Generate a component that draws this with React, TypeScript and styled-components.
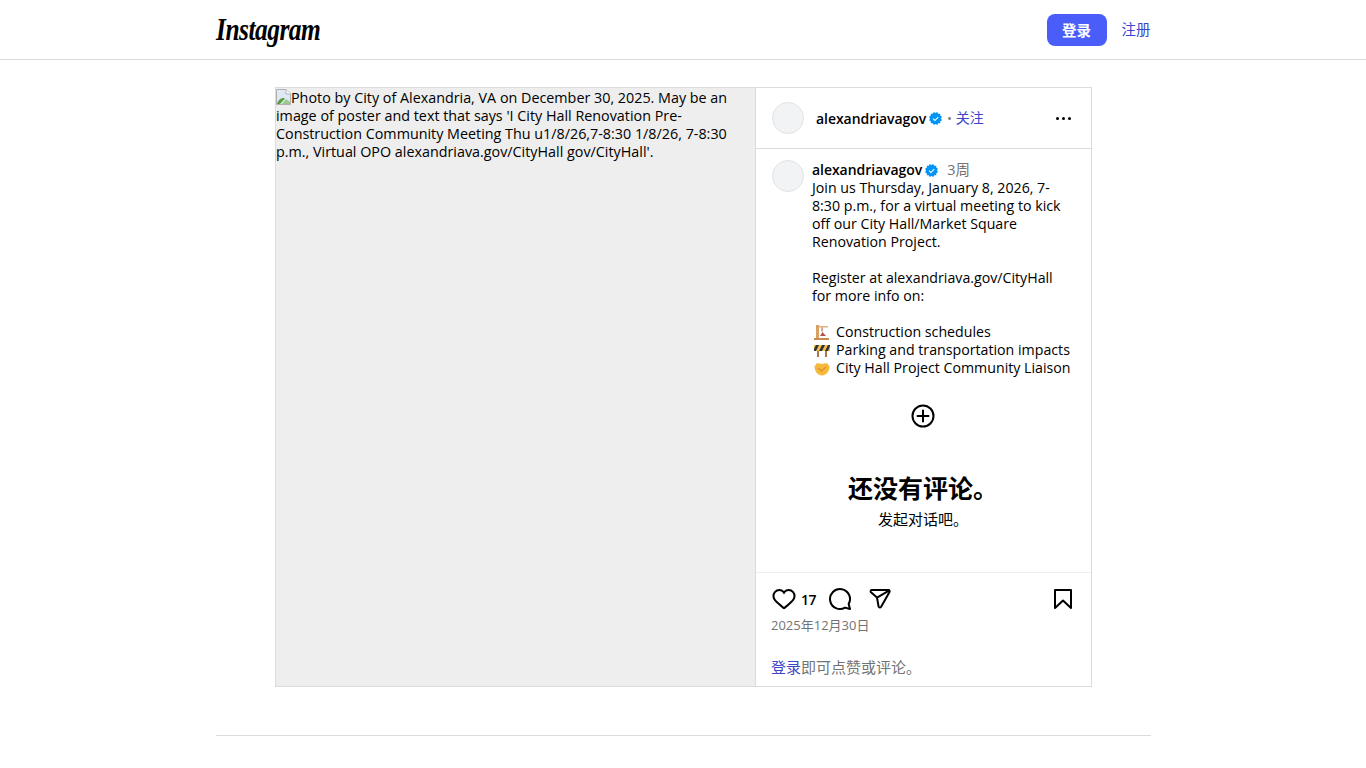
import React from 'react';
import styled, { createGlobalStyle } from 'styled-components';

const FONT = '"Open Sans", "Noto Sans CJK SC", sans-serif';

const GlobalStyle = createGlobalStyle`
  html, body {
    margin: 0;
    padding: 0;
    background: #fff;
    color: #000;
    font-family: ${FONT};
  }
`;

const TopBar = styled.header`
  height: 59px;
  border-bottom: 1px solid #dbdbdb;
`;

const TopBarInner = styled.div`
  width: 935px;
  height: 100%;
  margin: 0 auto;
  display: flex;
  align-items: center;
  justify-content: space-between;
`;

const Wordmark = styled.span`
  display: inline-block;
  font-family: "Liberation Serif", serif;
  font-style: italic;
  font-weight: 700;
  font-size: 31px;
  letter-spacing: -0.6px;
  line-height: 36px;
  color: #000;
  transform: scaleX(0.82);
  transform-origin: left center;
`;

const AuthLinks = styled.div`
  display: flex;
  align-items: center;
  gap: 15px;
`;

const LoginButton = styled.button`
  width: 60px;
  height: 32px;
  border: 0;
  border-radius: 8px;
  background: #4a5df9;
  color: #fff;
  font-family: ${FONT};
  font-size: 14.5px;
  font-weight: 700;
  padding: 0;
`;

const BlueLink = styled.a<{ $size?: number }>`
  color: #3c46c9;
  font-size: ${p => p.$size ?? 14.5}px;
  line-height: 18px;
`;

const Main = styled.main`
  width: 817px;
  margin: 27px 0 0 275px;
`;

const Post = styled.article`
  box-sizing: border-box;
  height: 600px;
  border: 1px solid #dbdbdb;
  display: flex;
`;

const PhotoPane = styled.div`
  width: 479px;
  padding-top: 1px;
  background: #eeeeee;
  font-size: 14.33px;
  line-height: 18px;
  color: #000;
`;

const BrokenIcon = styled.svg`
  width: 15px;
  height: 16px;
  vertical-align: -2px;
`;

const SidePane = styled.div`
  flex: 1;
  min-width: 0;
  border-left: 1px solid #dbdbdb;
  display: flex;
  flex-direction: column;
`;

const PostHeader = styled.div`
  height: 60px;
  border-bottom: 1px solid #dbdbdb;
  display: flex;
  align-items: center;
  padding: 0 16px;
`;

const Avatar = styled.div`
  flex: none;
  box-sizing: border-box;
  width: 32px;
  height: 32px;
  border-radius: 50%;
  background: #f1f3f5;
  border: 1px solid #e3e3e3;
`;

const HeaderName = styled.span`
  margin: 1px 0 0 12px;
  font-size: 14px;
  font-weight: 600;
  line-height: 18px;
  letter-spacing: -0.05px;
`;

const Badge = styled.svg`
  flex: none;
  width: 13px;
  height: 13px;
  margin-left: 3px;
`;

const Dot = styled.span`
  margin: 0 4px 0 5px;
  color: #737373;
  font-size: 12px;
`;

const MoreButton = styled.div`
  margin-left: auto;
  display: flex;
  gap: 3px;
  padding-right: 4px;
`;

const MoreDot = styled.i`
  width: 3px;
  height: 3px;
  border-radius: 50%;
  background: #000;
`;

const Comments = styled.div`
  flex: 1;
  min-height: 0;
  padding: 11px 16px 0;
  display: flex;
  flex-direction: column;
`;

const CommentRow = styled.div`
  display: flex;
`;

const CommentBody = styled.div`
  width: 258px;
  margin: 1px 0 0 8px;
  font-size: 14.2px;
  line-height: 18px;
`;

const CommentHead = styled.div`
  display: flex;
  align-items: center;
`;

const CommentName = styled.span`
  font-size: 14px;
  font-weight: 600;
  letter-spacing: -0.05px;
`;

const Age = styled.span`
  margin-left: 9px;
  color: #737373;
  font-size: 14.5px;
`;

const Paragraph = styled.p`
  margin: 0 0 18px;
`;

const EmojiLine = styled.div`
  display: flex;
  align-items: center;
  gap: 6px;
  white-space: nowrap;
`;

const Emoji = styled.svg`
  flex: none;
  margin-left: 2px;
  width: 16px;
  height: 17px;
`;

const EmptyState = styled.div`
  display: flex;
  flex-direction: column;
  align-items: center;
`;

const PlusIcon = styled.svg`
  width: 24px;
  height: 24px;
  margin: 27px 1px 0 0;
`;

const EmptyTitle = styled.h2`
  margin: 44px 1px 0 0;
  font-size: 25px;
  font-weight: 700;
  line-height: 32px;
`;

const EmptySub = styled.p`
  margin: 6px 1px 0 0;
  font-size: 15px;
  line-height: 18px;
`;

const Actions = styled.section`
  border-top: 1px solid #efefef;
  padding: 14px 16px 0;
  height: 114px;
  box-sizing: border-box;
`;

const ActionRow = styled.div`
  display: flex;
  align-items: center;
  height: 24px;
`;

const ActionIcon = styled.svg<{ $gap?: number }>`
  flex: none;
  width: 24px;
  height: 24px;
  margin-left: ${p => p.$gap ?? 0}px;
  color: #000;
`;

const LikeCount = styled.span`
  margin-left: 5px;
  font-size: 14px;
  font-weight: 600;
  letter-spacing: -0.4px;
`;

const SaveIcon = styled(ActionIcon)`
  margin-left: auto;
`;

const DateText = styled.time`
  display: block;
  margin: 6px 0 0 -1px;
  color: #737373;
  font-size: 13px;
  line-height: 16px;
`;

const LoginHint = styled.div`
  margin: 25px 0 0 -1px;
  color: #737373;
  font-size: 15px;
  line-height: 18px;
`;

const FooterRule = styled.hr`
  width: 935px;
  height: 1px;
  margin: 48px auto 0;
  border: 0;
  background: #dbdbdb;
`;

const VerifiedBadge = () => (
  <Badge viewBox="0 0 40 40">
    <path
      fill="#0095f6"
      fillRule="evenodd"
      d="M19.998 3.094 14.638 0l-2.972 5.15H5.432v6.354L0 14.64 3.094 20 0 25.359l5.432 3.137v5.905h5.975L14.638 40l5.36-3.094L25.358 40l3.232-5.6h6.162v-6.01L40 25.359 36.905 20 40 14.641l-5.248-3.03v-6.46h-6.419L25.358 0l-5.36 3.094Zm7.415 11.225 2.254 2.287-11.43 11.5-6.835-6.93 2.244-2.258 4.587 4.581 9.18-9.18Z"
    />
  </Badge>
);

const App = () => (
  <>
    <GlobalStyle />
    <TopBar>
      <TopBarInner>
        <Wordmark>Instagram</Wordmark>
        <AuthLinks>
          <LoginButton>登录</LoginButton>
          <BlueLink>注册</BlueLink>
        </AuthLinks>
      </TopBarInner>
    </TopBar>
    <Main>
      <Post>
        <PhotoPane>
          <BrokenIcon viewBox="0 0 15 16">
            <path d="M0.5 0.5H10L14.5 5V15.5H0.5Z" fill="#dfe8f5" stroke="#b0b0b0" />
            <path d="M10 0.5V5H14.5" fill="#fff" stroke="#b0b0b0" />
            <path d="M1 15C2 11 6 8 9 9.5L4 15Z" fill="#58a143" />
            <path d="M6 15l4-5 4 3v2Z" fill="#9bc98c" />
          </BrokenIcon>
          Photo by City of Alexandria, VA on December 30, 2025. May be an image of poster and text that says 'I City Hall Renovation Pre-Construction Community Meeting Thu u1/8/26,7-8:30 1/8/26, 7-8:30 p.m., Virtual OPO alexandriava.gov/CityHall gov/CityHall'.
        </PhotoPane>
        <SidePane>
          <PostHeader>
            <Avatar />
            <HeaderName>alexandriavagov</HeaderName>
            <VerifiedBadge />
            <Dot>•</Dot>
            <BlueLink $size={14}>关注</BlueLink>
            <MoreButton>
              <MoreDot />
              <MoreDot />
              <MoreDot />
            </MoreButton>
          </PostHeader>
          <Comments>
            <CommentRow>
              <Avatar />
              <CommentBody>
                <CommentHead>
                  <CommentName>alexandriavagov</CommentName>
                  <VerifiedBadge />
                  <Age>3周</Age>
                </CommentHead>
                <Paragraph>
                  Join us Thursday, January 8, 2026, 7-8:30 p.m., for a virtual meeting to kick off our City Hall/Market Square Renovation Project.
                </Paragraph>
                <Paragraph>
                  Register at alexandriava.gov/CityHall for more info on:
                </Paragraph>
                <EmojiLine>
                  <Emoji viewBox="0 0 16 17">
                    <path d="M2 1h3v14H2z" fill="#d9a066" />
                    <path d="M5 2h9v1.5H5z" fill="#e0b27e" />
                    <path d="M0 14h15v2H0z" fill="#c98a4b" />
                    <path d="M8 3.5v4" stroke="#a0522d" />
                    <path d="M6 12l2.5-4 3.5 4Z" fill="#b5544a" />
                  </Emoji>
                  Construction schedules
                </EmojiLine>
                <EmojiLine>
                  <Emoji viewBox="0 0 16 17">
                    <path d="M3 9h2v6H3zM11 9h2v6h-2z" fill="#a87a4a" />
                    <path d="M0 3h16v6H0z" fill="#f2c14e" />
                    <path d="M2 3h3L2 9H0V7zM8 3h3L8 9H5zM14 3h2v1l-2 5h-3z" fill="#333" />
                  </Emoji>
                  Parking and transportation impacts
                </EmojiLine>
                <EmojiLine>
                  <Emoji viewBox="0 0 16 17">
                    <path d="M0.5 6.5L3 3l5 1 5-1 2.5 3.5c0 5-3.5 9-7.5 9S0.5 11.5 0.5 6.5Z" fill="#f6b93b" />
                    <path d="M4 8l3.5 3L12 7" fill="none" stroke="#e0902a" strokeWidth="1.2" />
                  </Emoji>
                  City Hall Project Community Liaison
                </EmojiLine>
              </CommentBody>
            </CommentRow>
            <EmptyState>
              <PlusIcon viewBox="0 0 24 24" fill="none" stroke="#000" strokeWidth="2">
                <circle cx="12" cy="12" r="10.5" />
                <path d="M12 6.5v11M6.5 12h11" strokeLinecap="round" />
              </PlusIcon>
              <EmptyTitle>还没有评论。</EmptyTitle>
              <EmptySub>发起对话吧。</EmptySub>
            </EmptyState>
          </Comments>
          <Actions>
            <ActionRow>
              <ActionIcon viewBox="0 0 24 24" fill="currentColor">
                <path d="M16.792 3.904A4.989 4.989 0 0 1 21.5 9.122c0 3.072-2.652 4.959-5.197 7.222-2.512 2.243-3.865 3.469-4.303 3.752-.477-.309-2.143-1.823-4.303-3.752C5.141 14.072 2.5 12.167 2.5 9.122a4.989 4.989 0 0 1 4.708-5.218 4.21 4.21 0 0 1 3.675 1.941c.84 1.175.98 1.763 1.12 1.763s.278-.588 1.11-1.766a4.17 4.17 0 0 1 3.679-1.938m0-2a6.04 6.04 0 0 0-4.797 2.127 6.052 6.052 0 0 0-4.787-2.127A6.985 6.985 0 0 0 .5 9.122c0 3.61 2.55 5.827 5.015 7.97.283.246.569.494.853.747l1.027.918a44.998 44.998 0 0 0 3.518 3.018 2 2 0 0 0 2.174 0 45.263 45.263 0 0 0 3.626-3.115l.922-.824c.293-.26.59-.519.885-.774 2.334-2.025 4.98-4.32 4.98-7.94a6.985 6.985 0 0 0-6.708-7.218Z" />
              </ActionIcon>
              <LikeCount>17</LikeCount>
              <ActionIcon viewBox="0 0 24 24" $gap={12} fill="none" stroke="currentColor" strokeWidth="2" strokeLinejoin="round">
                <path d="M20.656 17.008a9.993 9.993 0 1 0-3.59 3.615L22 22Z" />
              </ActionIcon>
              <ActionIcon viewBox="0 0 24 24" $gap={16} fill="none" stroke="currentColor" strokeWidth="2" strokeLinejoin="round" strokeLinecap="round">
                <path d="M3.6 3h16.8a1.3 1.3 0 0 1 1.1 2l-8.2 14.6a1.5 1.5 0 0 1-2.8-.4L9 10.6 3 5.2A1.3 1.3 0 0 1 3.6 3Z" />
                <line x1="21" x2="9" y1="3.6" y2="10.6" />
              </ActionIcon>
              <SaveIcon viewBox="0 0 24 24" fill="none" stroke="currentColor" strokeWidth="2" strokeLinecap="round" strokeLinejoin="round">
                <polygon points="20 21 12 13.44 4 21 4 3 20 3 20 21" />
              </SaveIcon>
            </ActionRow>
            <DateText>2025年12月30日</DateText>
            <LoginHint>
              <BlueLink $size={15}>登录</BlueLink>即可点赞或评论。
            </LoginHint>
          </Actions>
        </SidePane>
      </Post>
    </Main>
    <FooterRule />
  </>
);

export default App;
